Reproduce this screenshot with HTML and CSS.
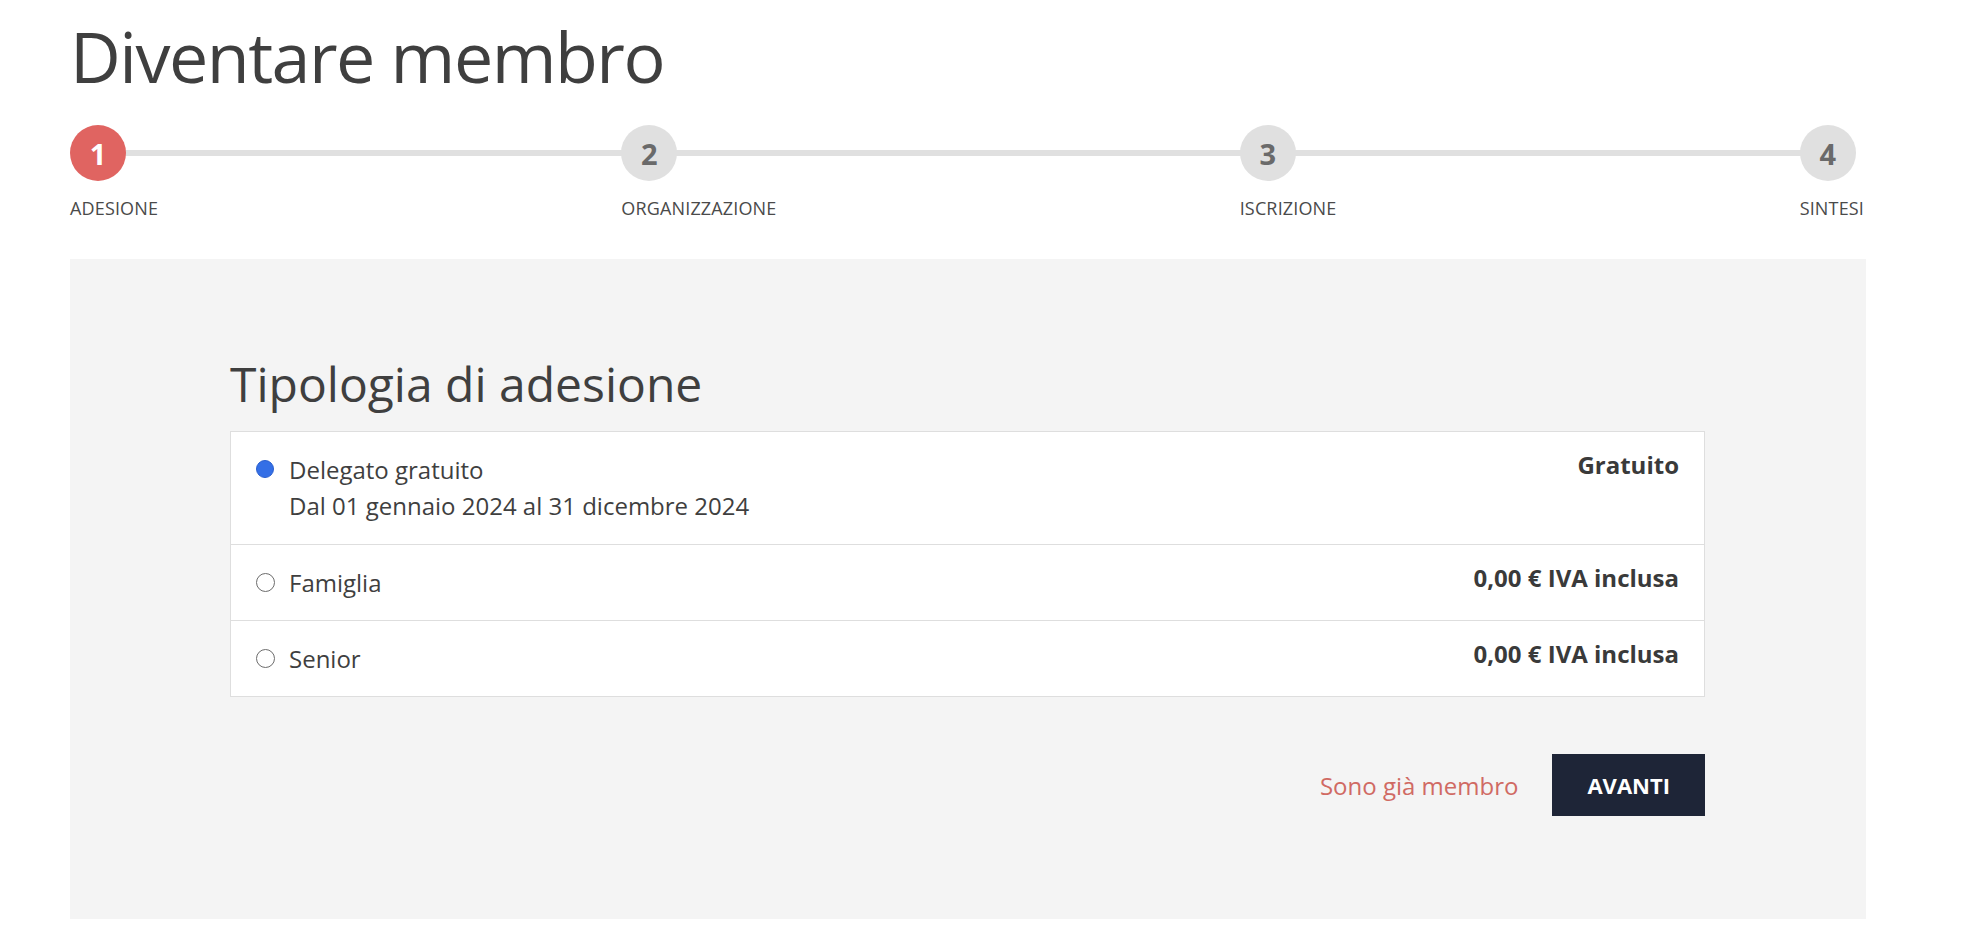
FILE: index.html
```html
<!DOCTYPE html>
<html lang="it">
<head>
<meta charset="utf-8">
<title>Diventare membro</title>
<link rel="stylesheet" href="styles.css">
</head>
<body>
<div class="page">
  <h1 class="page-title">Diventare membro</h1>

  <ol class="steps">
    <li class="step step-active"><span class="step-num">1</span><span class="step-label">ADESIONE</span></li>
    <li class="step"><span class="step-num">2</span><span class="step-label">ORGANIZZAZIONE</span></li>
    <li class="step"><span class="step-num">3</span><span class="step-label">ISCRIZIONE</span></li>
    <li class="step"><span class="step-num">4</span><span class="step-label">SINTESI</span></li>
  </ol>

  <section class="panel">
    <h2 class="panel-title">Tipologia di adesione</h2>
    <div class="options">
      <div class="option">
        <span class="radio radio-checked"></span>
        <div class="option-text">
          <div class="option-name">Delegato gratuito</div>
          <div class="option-desc">Dal 01 gennaio 2024 al 31 dicembre 2024</div>
        </div>
        <div class="option-price">Gratuito</div>
      </div>
      <div class="option">
        <span class="radio"></span>
        <div class="option-text">
          <div class="option-name">Famiglia</div>
        </div>
        <div class="option-price">0,00 € IVA inclusa</div>
      </div>
      <div class="option">
        <span class="radio"></span>
        <div class="option-text">
          <div class="option-name">Senior</div>
        </div>
        <div class="option-price">0,00 € IVA inclusa</div>
      </div>
    </div>
    <div class="actions">
      <a class="link-member" href="#">Sono già membro</a>
      <button class="btn-next" type="button">AVANTI</button>
    </div>
  </section>
</div>
</body>
</html>
```

FILE: styles.css
```css
html, body {
  margin: 0;
  padding: 0;
  background: #ffffff;
}

body {
  font-family: "Open Sans", "Liberation Sans", sans-serif;
  color: #3f3f3f;
  overflow: hidden;
}

.page {
  padding: 8px 97px 27px 70px;
}

.page-title {
  margin: 0 0 21px;
  font-size: 70px;
  font-weight: 400;
  line-height: normal;
  letter-spacing: -1.5px;
  color: #3f3f3f;
}

.steps {
  list-style: none;
  margin: 0 2px 0 0;
  padding: 0;
  display: flex;
  justify-content: space-between;
  position: relative;
}

.steps::before {
  content: "";
  position: absolute;
  left: 28px;
  right: 36px;
  top: 25px;
  height: 6px;
  background: #e0e0e0;
}

.step {
  display: flex;
  flex-direction: column;
  align-items: flex-start;
  position: relative;
}

.step-num {
  width: 56px;
  height: 56px;
  border-radius: 50%;
  background: #e0e0e0;
  color: #6a6a6a;
  font-weight: 700;
  font-size: 29px;
  display: flex;
  align-items: center;
  justify-content: center;
  line-height: 1;
}

.step-active .step-num {
  background: #e06461;
  color: #ffffff;
}

.step-label {
  margin-top: 15px;
  font-size: 18px;
  letter-spacing: 0.15px;
  color: #4a4a4a;
  line-height: normal;
}

.panel {
  box-sizing: border-box;
  height: 660px;
  margin-top: 39px;
  background: #f4f4f4;
  padding: 92px 161px 0 160px;
}

.panel-title {
  margin: 0 0 15px;
  font-size: 48px;
  font-weight: 400;
  line-height: normal;
  color: #3f3f3f;
}

.options {
  background: #ffffff;
  border: 1px solid #dedede;
}

.option {
  display: flex;
  align-items: flex-start;
  padding: 20px 25px;
  font-size: 24px;
  line-height: 35px;
}

.option + .option {
  border-top: 1px solid #dedede;
}

.option-desc {
  line-height: 37px;
}

.radio {
  flex: none;
  width: 19px;
  height: 19px;
  margin-top: 8px;
  margin-right: 14px;
  border-radius: 50%;
  box-sizing: border-box;
  border: 1px solid #6c6c6c;
  background: #ffffff;
}

.radio-checked {
  width: 18px;
  height: 18px;
  margin-right: 15px;
  border: 1px solid #2a5fcf;
  background: #346fe6;
}

.option-text {
  flex: 1;
  color: #3f3f3f;
}

.option-price {
  font-weight: 700;
  line-height: 1.1;
  color: #3a3a3a;
}

.actions {
  margin-top: 57px;
  display: flex;
  justify-content: flex-end;
  align-items: center;
  gap: 34px;
}

.link-member {
  font-size: 24px;
  color: #d06a63;
  text-decoration: none;
}

.btn-next {
  height: 62px;
  padding: 0 35px;
  border: none;
  background: #1e2537;
  color: #ffffff;
  font-family: "Open Sans", "Liberation Sans", sans-serif;
  font-weight: 700;
  font-size: 22px;
  cursor: pointer;
}
```
